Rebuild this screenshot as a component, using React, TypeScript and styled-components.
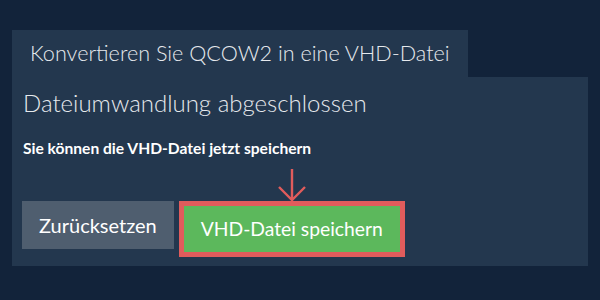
import React from 'react';
import styled, { createGlobalStyle } from 'styled-components';

const GlobalStyle = createGlobalStyle`
  html, body {
    margin: 0;
    padding: 0;
    background: #12233a;
    font-family: Lato, "Open Sans", sans-serif;
  }
`;

export default function App() {
  return (
    <>
      <GlobalStyle />
      <Page>
        <Tab>Konvertieren Sie QCOW2 in eine VHD-Datei</Tab>
        <Panel>
          <Heading>Dateiumwandlung abgeschlossen</Heading>
          <Note>Sie können die VHD-Datei jetzt speichern</Note>
          <ButtonRow>
            <Button $variant="grey">Zurücksetzen</Button>
            <Highlight>
              <Arrow width="30" height="34" viewBox="0 0 30 34">
                <path d="M15 1 V32 M2 19 L15 32 L28 19" fill="none" stroke="#e05c5c" strokeWidth="2.4" />
              </Arrow>
              <Button $variant="green">VHD-Datei speichern</Button>
            </Highlight>
          </ButtonRow>
        </Panel>
      </Page>
    </>
  );
}

const Page = styled.div`
  width: 600px;
  height: 300px;
  padding: 30px 12px 0;
  box-sizing: border-box;
  display: flex;
  flex-direction: column;
  align-items: flex-start;
`;

const Tab = styled.div`
  background: #23374e;
  color: #e6e9ed;
  font-size: 21.6px;
  font-weight: 300;
  height: 47px;
  line-height: 46px;
  padding: 0 18px;
  box-sizing: border-box;
  white-space: nowrap;
`;

const Panel = styled.div`
  background: #23374e;
  width: 576px;
  height: 189px;
  box-sizing: border-box;
  padding: 12px 10px 10px;
  display: flex;
  flex-direction: column;
`;

const Heading = styled.div`
  color: #e6e9ed;
  font-size: 24px;
  font-weight: 300;
  line-height: 28px;
  margin-left: 1px;
`;

const Note = styled.div`
  color: #ffffff;
  font-size: 15.6px;
  font-weight: 700;
  line-height: 18px;
  margin-top: 22px;
  margin-left: 1px;
`;

const ButtonRow = styled.div`
  display: flex;
  align-items: flex-start;
  gap: 5px;
  margin-top: 44px;
`;

const Highlight = styled.div`
  position: relative;
  border: 5px solid #e05c5c;
`;

const Arrow = styled.svg`
  position: absolute;
  left: 50%;
  bottom: 100%;
  margin-left: -15px;
  margin-bottom: 4px;
  display: block;
`;

const Button = styled.div<{ $variant: 'grey' | 'green' }>`
  background: ${(p) => (p.$variant === 'green' ? '#5cb85c' : '#4f5e6f')};
  color: #ffffff;
  font-size: ${(p) => (p.$variant === 'green' ? '19.3px' : '20px')};
  font-weight: 400;
  height: ${(p) => (p.$variant === 'green' ? '46px' : '48px')};
  line-height: ${(p) => (p.$variant === 'green' ? '46px' : '48px')};
  padding: 0 17px;
  box-sizing: border-box;
  white-space: nowrap;
`;
